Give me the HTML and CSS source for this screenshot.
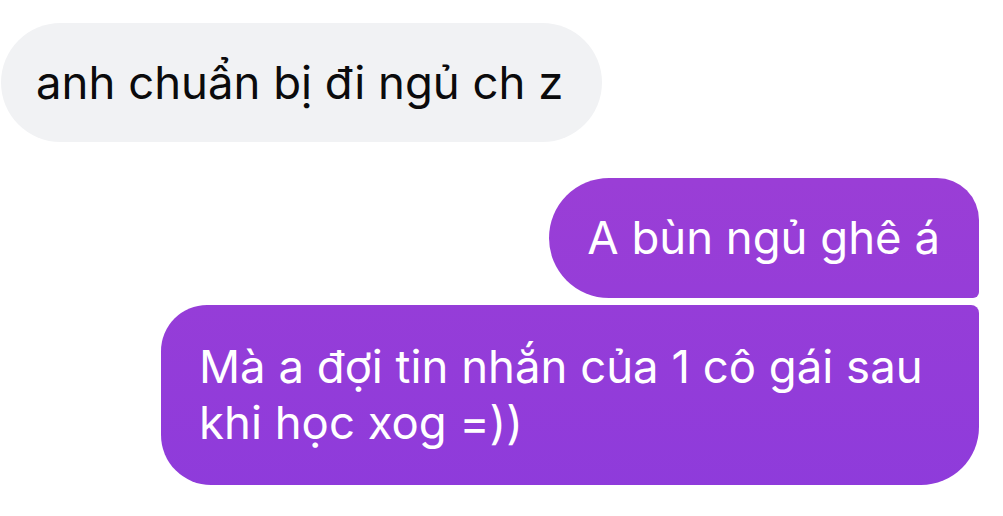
FILE: index.html
```html
<!DOCTYPE html>
<html lang="vi">
<head>
<meta charset="utf-8">
<title>Chat</title>
<link rel="stylesheet" href="styles.css">
</head>
<body>
<div class="thread">
  <div class="row row-in">
    <div class="bubble bubble-in">anh chuẩn bị đi ngủ ch z</div>
  </div>
  <div class="group-out">
    <div class="row row-out">
      <div class="bubble bubble-out first">A bùn ngủ ghê á</div>
    </div>
    <div class="row row-out">
      <div class="bubble bubble-out last">Mà a đợi tin nhắn của 1 cô gái sau khi học xog =))</div>
    </div>
  </div>
</div>
</body>
</html>
```

FILE: styles.css
```css
html, body {
  margin: 0;
  padding: 0;
  background: #ffffff;
}

body {
  width: 1003px;
  height: 516px;
  overflow: hidden;
  font-family: "Inter", "Roboto", "Noto Sans", sans-serif;
  font-size: 45.5px;
  line-height: 56px;
}

.thread {
  display: flex;
  flex-direction: column;
  padding: 23px 24px 0 1px;
  gap: 36px;
}

.group-out {
  display: flex;
  flex-direction: column;
  gap: 7px;
}

.row {
  display: flex;
}

.row-in {
  justify-content: flex-start;
}

.row-out {
  justify-content: flex-end;
}

.bubble {
  max-width: 741px;
  box-sizing: content-box;
}

.bubble-in {
  background: #f1f2f4;
  color: #0b0b0c;
  border-radius: 60px;
  padding: 32px 39px 31px 35px;
}

.bubble-out {
  color: #ffffff;
  background: linear-gradient(180deg, #a041d3 0px, #9a3ed6 180px, #8e3bdb 500px);
  background-attachment: fixed;
  padding: 32px 39px 32px 38px;
}

.bubble-out.first {
  border-radius: 60px 42px 6px 60px;
}

.bubble-out.last {
  padding-top: 34px;
  padding-bottom: 34px;
  border-radius: 46px 8px 58px 50px;
}
```
